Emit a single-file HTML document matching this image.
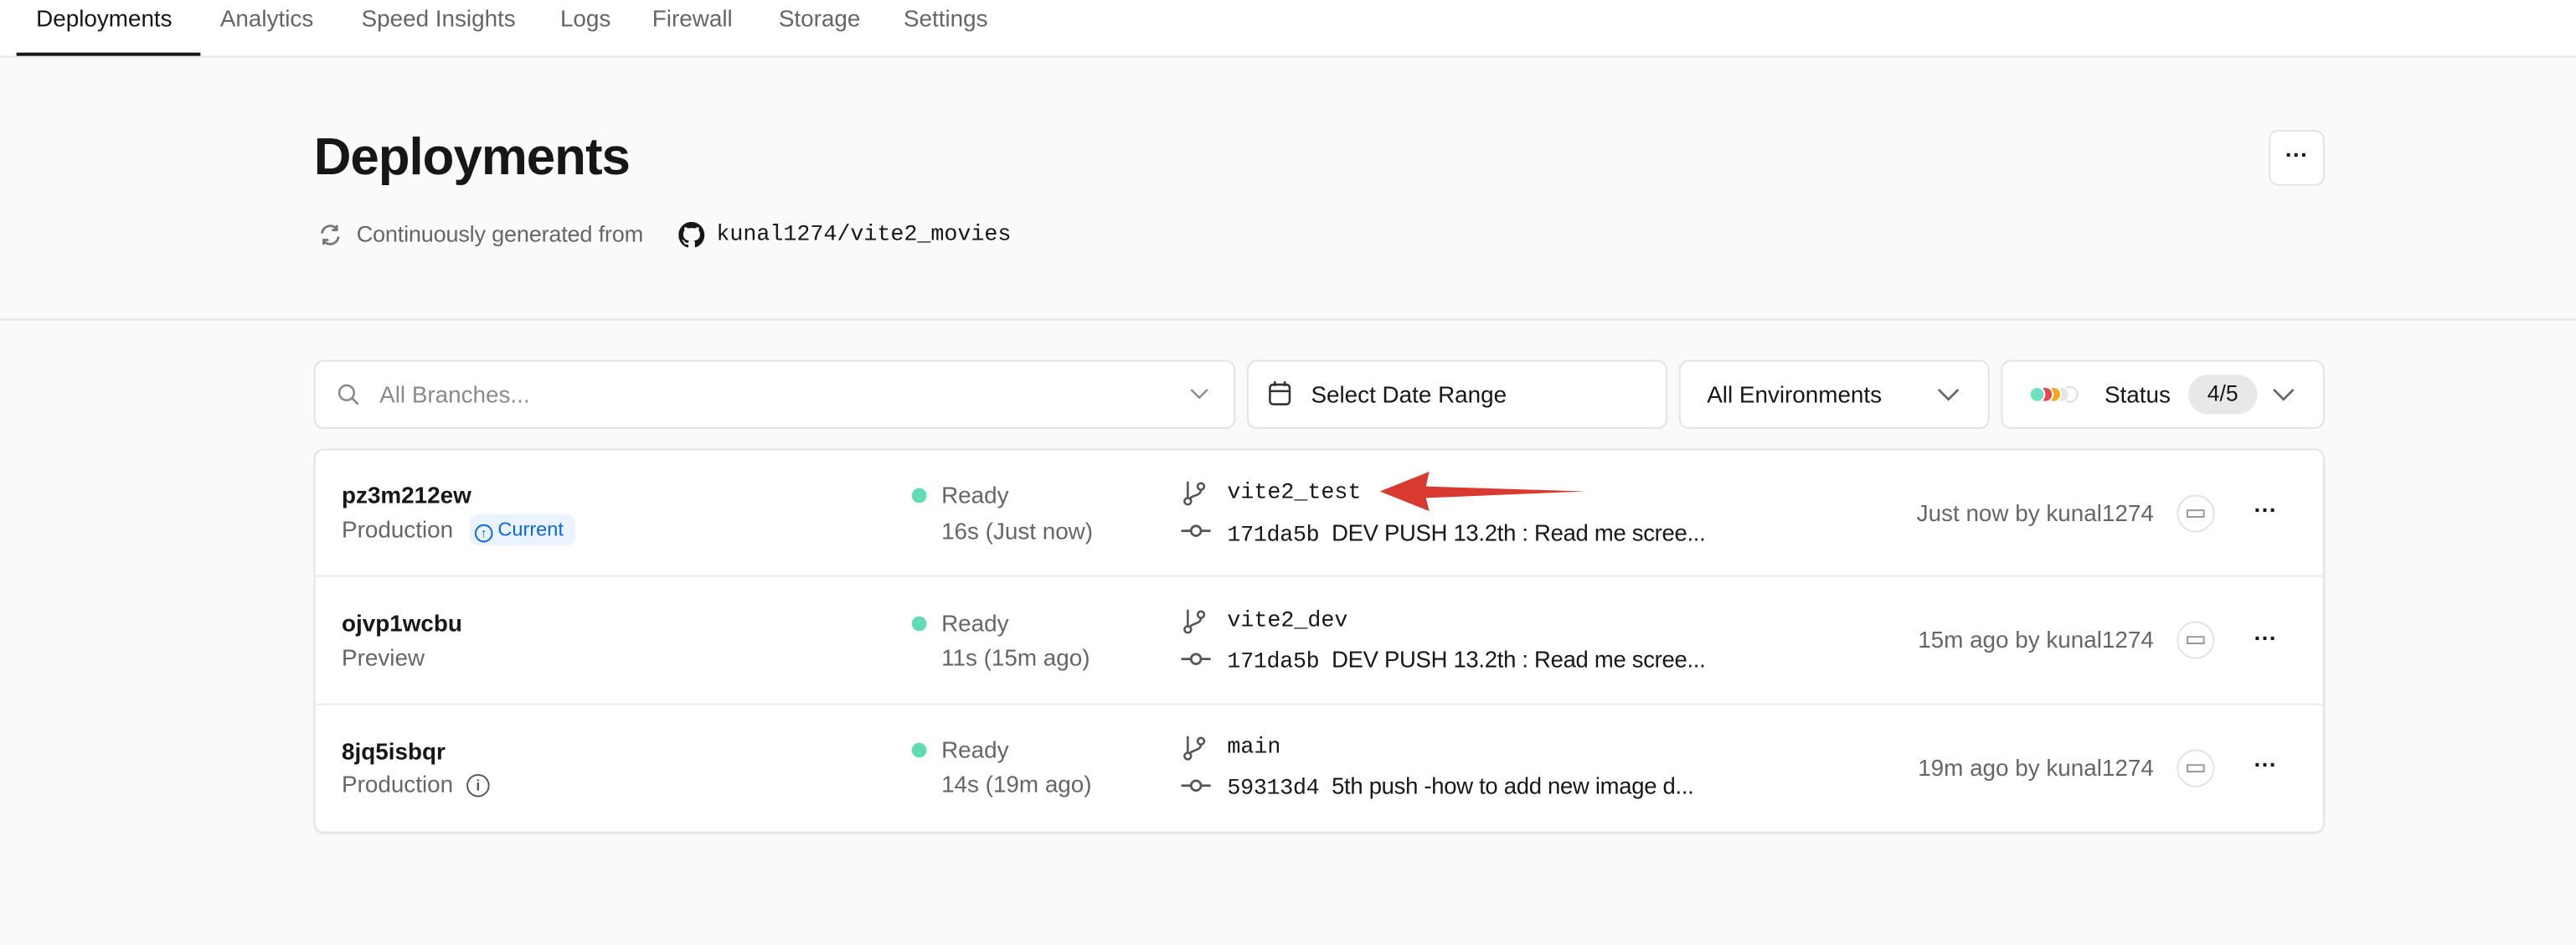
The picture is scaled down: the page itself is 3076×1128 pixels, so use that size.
<!DOCTYPE html>
<html><head><meta charset="utf-8"><style>
html,body{margin:0;padding:0;width:3076px;height:1128px;overflow:hidden;background:#fafafa}
#w{position:absolute;left:0;top:0;width:1568px;height:575px;transform:scale(1.96173);transform-origin:0 0;font-family:"Liberation Sans",sans-serif;color:#171717}
.a{position:absolute;white-space:nowrap}
.mono{font-family:"Liberation Mono",monospace}
.box{position:absolute;background:#fff;border:1px solid #e3e3e3;border-radius:6px;box-sizing:border-box}
.g{color:#666}
</style></head><body><div id="w">
<div class="a" style="left:0;top:0;width:1568px;height:34px;background:#fff;border-bottom:1px solid #e8e8e8"></div>
<div class="a" style="left:10px;top:32px;width:112px;height:2px;background:#171717"></div>
<div class="a" style="top:4px;left:22px;font-size:14.2px">Deployments</div>
<div class="a g" style="top:4px;left:134px;font-size:14.2px">Analytics</div>
<div class="a g" style="top:4px;left:220px;font-size:14.2px">Speed Insights</div>
<div class="a g" style="top:4px;left:341px;font-size:14.2px">Logs</div>
<div class="a g" style="top:4px;left:397px;font-size:14.2px">Firewall</div>
<div class="a g" style="top:4px;left:474px;font-size:14.2px">Storage</div>
<div class="a g" style="top:4px;left:550px;font-size:14.2px">Settings</div>

<div class="a" style="left:191px;top:77px;font-size:31.5px;font-weight:600;letter-spacing:-0.5px">Deployments</div>
<svg class="a" style="left:193px;top:135px" width="16" height="16" viewBox="0 0 16 16" fill="none" stroke="#777" stroke-width="1.4"><path d="M3 7a5 5 0 0 1 9-2.5M12 2v3h-3M13 9a5 5 0 0 1-9 2.5M4 14v-3h3"/></svg>
<div class="a g" style="left:217px;top:135px;font-size:13.8px;letter-spacing:-0.1px">Continuously generated from</div>
<svg class="a" style="left:413px;top:135px" width="16" height="16" viewBox="0 0 16 16"><path fill="#171717" d="M8 0a8 8 0 0 0-2.5 15.6c.4 0 .5-.2.5-.4v-1.5c-2.2.5-2.7-1-2.7-1-.4-.9-.9-1.2-.9-1.2-.7-.5.1-.5.1-.5.8.1 1.2.8 1.2.8.7 1.3 1.9.9 2.3.7.1-.5.3-.9.5-1.1-1.8-.2-3.6-.9-3.6-4 0-.9.3-1.6.8-2.1-.1-.2-.4-1 .1-2.1 0 0 .7-.2 2.2.8a7.5 7.5 0 0 1 4 0c1.5-1 2.2-.8 2.2-.8.4 1.1.2 1.9.1 2.1.5.6.8 1.3.8 2.1 0 3.1-1.9 3.8-3.6 4 .3.3.5.8.5 1.5v2.2c0 .3.1.5.6.4A8 8 0 0 0 8 0z"/></svg>
<div class="a mono" style="left:436px;top:136px;font-size:13.6px">kunal1274/vite2_movies</div>
<div class="box" style="left:1381px;top:79px;width:34px;height:34px;text-align:center;line-height:28px;font-weight:bold;font-size:14px">···</div>
<div class="a" style="left:0;top:194px;width:1568px;height:1px;background:#e5e5e5"></div>

<div class="box" style="left:191px;top:219px;width:561px;height:42px"></div>
<svg class="a" style="left:205px;top:233px" width="14" height="14" viewBox="0 0 14 14" fill="none" stroke="#888" stroke-width="1.3"><circle cx="6" cy="6" r="4.5"/><path d="M9.3 9.3L13 13"/></svg>
<div class="a" style="left:231px;top:233px;font-size:14.2px;color:#8a8a8a">All Branches...</div>
<svg class="a" style="left:724px;top:236px" width="12" height="8" viewBox="0 0 12 8" fill="none" stroke="#888" stroke-width="1.2"><path d="M1 1l5 5 5-5"/></svg>
<div class="box" style="left:759px;top:219px;width:256px;height:42px"></div>
<svg class="a" style="left:772px;top:231px" width="14" height="16" viewBox="0 0 14 16" fill="none" stroke="#333" stroke-width="1.3"><rect x="1" y="3" width="12" height="12" rx="2"/><path d="M1 7h12M4 1v3M10 1v3"/></svg>
<div class="a" style="left:798px;top:233px;font-size:14.2px">Select Date Range</div>
<div class="box" style="left:1022px;top:219px;width:189px;height:42px"></div>
<div class="a" style="left:1039px;top:233px;font-size:14.2px">All Environments</div>
<svg class="a" style="left:1179px;top:236px" width="14" height="9" viewBox="0 0 14 9" fill="none" stroke="#666" stroke-width="1.4"><path d="M1 1l6 6 6-6"/></svg>
<div class="box" style="left:1218px;top:219px;width:197px;height:42px"></div>
<svg class="a" style="left:1234px;top:234px" width="36" height="12" viewBox="0 0 36 12"><circle cx="26" cy="6" r="4.5" fill="#fff" stroke="#ddd"/><circle cx="21" cy="6" r="4.5" fill="#e5e5e5" stroke="#fff"/><circle cx="16" cy="6" r="4.5" fill="#f5a623" stroke="#fff"/><circle cx="11" cy="6" r="4.5" fill="#e5484d" stroke="#fff"/><circle cx="6" cy="6" r="4.5" fill="#6fe0c0" stroke="#fff"/></svg>
<div class="a" style="left:1281px;top:233px;font-size:14.2px">Status</div>
<div class="a" style="left:1332px;top:228px;width:42px;height:24px;border-radius:12px;background:#e8e8e8;text-align:center;line-height:24px;font-size:13.5px">4/5</div>
<svg class="a" style="left:1383px;top:236px" width="14" height="9" viewBox="0 0 14 9" fill="none" stroke="#666" stroke-width="1.4"><path d="M1 1l6 6 6-6"/></svg>

<div class="box" style="left:191px;top:273px;width:1224px;height:234px;box-shadow:0 1px 2px rgba(0,0,0,.04)"></div>
<div class="a" style="left:192px;top:350px;width:1222px;height:1px;background:#ececec"></div>
<div class="a" style="left:192px;top:428px;width:1222px;height:1px;background:#ececec"></div>

<div class="a" style="left:208px;top:294px;font-size:14.2px;font-weight:bold">pz3m212ew</div>
<div class="a g" style="left:208px;top:315px;font-size:14.2px">Production</div>
<div class="a" style="left:286px;top:313px;width:64px;height:19px;border-radius:5px;background:#eaf3ff;color:#0a68e0;font-size:12px;line-height:19px"><span style="display:inline-block;width:9px;height:9px;border:1.2px solid #0a68e0;border-radius:50%;margin:0 3px 0 3px;vertical-align:-1px;font-size:8px;line-height:9px;text-align:center">↑</span>Current</div>
<div class="a" style="left:208px;top:372px;font-size:14.2px;font-weight:bold">ojvp1wcbu</div>
<div class="a g" style="left:208px;top:393px;font-size:14.2px">Preview</div>
<div class="a" style="left:208px;top:450px;font-size:14.2px;font-weight:bold">8jq5isbqr</div>
<div class="a g" style="left:208px;top:470px;font-size:14.2px">Production</div>
<div class="a" style="left:284px;top:471px;width:12px;height:12px;border:1.3px solid #555;border-radius:50%;font-size:9px;line-height:12px;text-align:center;color:#555;font-weight:bold">i</div>

<div class="a" style="left:555px;top:297px;width:9px;height:9px;border-radius:50%;background:#5fdcb3"></div>
<div class="a g" style="left:573px;top:294px;font-size:14.2px">Ready</div>
<div class="a g" style="left:573px;top:316px;font-size:14.2px">16s (Just now)</div>
<div class="a" style="left:555px;top:375px;width:9px;height:9px;border-radius:50%;background:#5fdcb3"></div>
<div class="a g" style="left:573px;top:372px;font-size:14.2px">Ready</div>
<div class="a g" style="left:573px;top:393px;font-size:14.2px">11s (15m ago)</div>
<div class="a" style="left:555px;top:452px;width:9px;height:9px;border-radius:50%;background:#5fdcb3"></div>
<div class="a g" style="left:573px;top:449px;font-size:14.2px">Ready</div>
<div class="a g" style="left:573px;top:470px;font-size:14.2px">14s (19m ago)</div>

<svg class="a" style="left:719px;top:292px" width="16" height="16" viewBox="0 0 16 16" fill="none" stroke="#555" stroke-width="1.3"><circle cx="4" cy="13" r="2"/><circle cx="12" cy="4" r="2"/><path d="M4 11V1M12 6c0 4-6 3-7 6"/></svg>
<div class="a mono" style="left:747px;top:293px;font-size:13.6px">vite2_test</div>
<svg class="a" style="left:719px;top:317px" width="18" height="12" viewBox="0 0 18 12" fill="none" stroke="#555" stroke-width="1.4"><circle cx="9" cy="6" r="3"/><path d="M0 6h6M12 6h6"/></svg>
<div class="a" style="left:747px;top:316px;font-size:14px;letter-spacing:-0.15px"><span class="mono" style="font-size:13.6px">171da5b</span>&nbsp; DEV PUSH 13.2th : Read me scree...</div>
<svg class="a" style="left:719px;top:370px" width="16" height="16" viewBox="0 0 16 16" fill="none" stroke="#555" stroke-width="1.3"><circle cx="4" cy="13" r="2"/><circle cx="12" cy="4" r="2"/><path d="M4 11V1M12 6c0 4-6 3-7 6"/></svg>
<div class="a mono" style="left:747px;top:371px;font-size:13.6px">vite2_dev</div>
<svg class="a" style="left:719px;top:395px" width="18" height="12" viewBox="0 0 18 12" fill="none" stroke="#555" stroke-width="1.4"><circle cx="9" cy="6" r="3"/><path d="M0 6h6M12 6h6"/></svg>
<div class="a" style="left:747px;top:393px;font-size:14px;letter-spacing:-0.15px"><span class="mono" style="font-size:13.6px">171da5b</span>&nbsp; DEV PUSH 13.2th : Read me scree...</div>
<svg class="a" style="left:719px;top:447px" width="16" height="16" viewBox="0 0 16 16" fill="none" stroke="#555" stroke-width="1.3"><circle cx="4" cy="13" r="2"/><circle cx="12" cy="4" r="2"/><path d="M4 11V1M12 6c0 4-6 3-7 6"/></svg>
<div class="a mono" style="left:747px;top:448px;font-size:13.6px">main</div>
<svg class="a" style="left:719px;top:472px" width="18" height="12" viewBox="0 0 18 12" fill="none" stroke="#555" stroke-width="1.4"><circle cx="9" cy="6" r="3"/><path d="M0 6h6M12 6h6"/></svg>
<div class="a" style="left:747px;top:470px;font-size:14px;letter-spacing:-0.15px"><span class="mono" style="font-size:13.6px">59313d4</span>&nbsp; 5th push -how to add new image d...</div>

<svg class="a" style="left:830px;top:280px" width="140" height="40" viewBox="830 280 140 40"><path fill="#d93a2f" d="M840 299L870 287L868 296L965 299L868 303L870 311Z"/></svg>

<div class="a g" style="right:257px;top:305px;font-size:14.2px">Just now by kunal1274</div>
<div class="a g" style="right:257px;top:382px;font-size:14.2px">15m ago by kunal1274</div>
<div class="a g" style="right:257px;top:460px;font-size:14.2px">19m ago by kunal1274</div>
<div class="a" style="left:1325px;top:301px;width:21px;height:21px;border:1px solid #e3e3e3;border-radius:50%;background:#fff"><div style="margin:8px 5px;height:3px;border:0.5px solid #999"></div></div>
<div class="a" style="left:1325px;top:378px;width:21px;height:21px;border:1px solid #e3e3e3;border-radius:50%;background:#fff"><div style="margin:8px 5px;height:3px;border:0.5px solid #999"></div></div>
<div class="a" style="left:1325px;top:456px;width:21px;height:21px;border:1px solid #e3e3e3;border-radius:50%;background:#fff"><div style="margin:8px 5px;height:3px;border:0.5px solid #999"></div></div>
<div class="a" style="left:1372px;top:302px;font-size:14px;font-weight:bold">···</div>
<div class="a" style="left:1372px;top:380px;font-size:14px;font-weight:bold">···</div>
<div class="a" style="left:1372px;top:457px;font-size:14px;font-weight:bold">···</div>
</div></body></html>
